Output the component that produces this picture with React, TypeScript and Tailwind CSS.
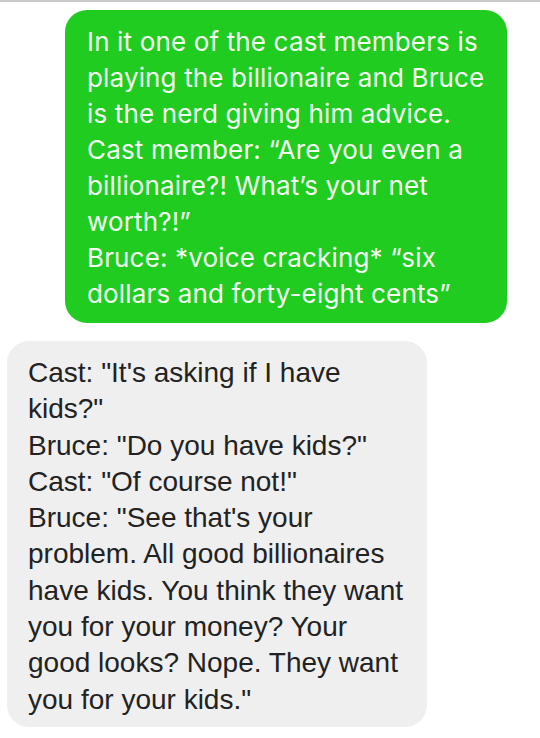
export default function App() {
  const green = [
    "In it one of the cast members is",
    "playing the billionaire and Bruce",
    "is the nerd giving him advice.",
    "Cast member: \u201CAre you even a",
    "billionaire?! What\u2019s your net",
    "worth?!\u201D",
    "Bruce: *voice cracking* \u201Csix",
    "dollars and forty-eight cents\u201D",
  ];
  const gray = [
    "Cast: \"It's asking if I have",
    "kids?\"",
    "Bruce: \"Do you have kids?\"",
    "Cast: \"Of course not!\"",
    "Bruce: \"See that's your",
    "problem. All good billionaires",
    "have kids. You think they want",
    "you for your money? Your",
    "good looks? Nope. They want",
    "you for your kids.\"",
  ];
  return (
    <div className="w-[540px] h-[738px] bg-white overflow-hidden flex flex-col border-t-2 border-[#c9c9c9]">
      <div className="ml-[65px] mt-[8px] w-[442px] h-[313px] rounded-[22px] bg-[#1fcc1f] pl-[22px] pt-[14px] text-[#f4fff2] text-[26px] leading-[36px] tracking-[0.15px] font-['Inter',sans-serif] whitespace-nowrap">
        {green.map((l, i) => (
          <div key={i}>{l}</div>
        ))}
      </div>
      <div className="ml-[7px] mt-[18px] w-[420px] h-[386px] rounded-[22px] bg-[#efefef] pl-[21px] pt-[14px] text-[#222222] text-[28px] leading-[36.3px] font-['Liberation_Sans',sans-serif] whitespace-nowrap">
        {gray.map((l, i) => (
          <div key={i}>{l}</div>
        ))}
      </div>
    </div>
  );
}
